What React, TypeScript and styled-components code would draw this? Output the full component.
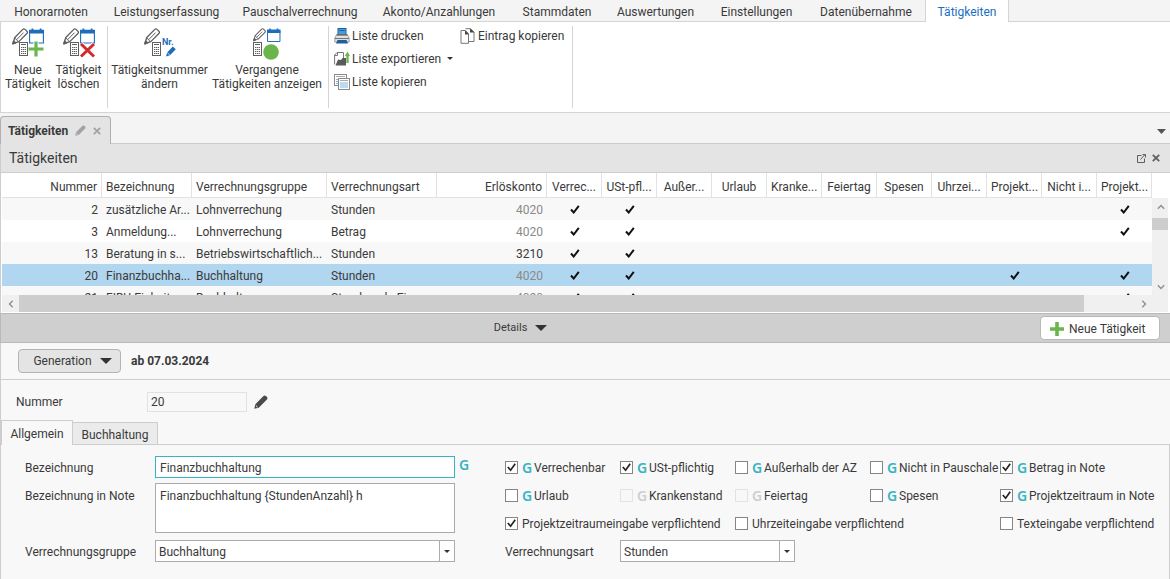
import React from 'react';
import styled, { createGlobalStyle, css } from 'styled-components';

const GlobalStyle = createGlobalStyle`
  * { box-sizing: border-box; }
  body {
    margin: 0;
    background: #f4f4f4;
  }
  body, button, input, select, textarea {
    font-family: Roboto, "Noto Sans", sans-serif;
    font-size: 12px;
    line-height: 16px;
    color: #3a3a3a;
  }
  button { cursor: pointer; }
`;

const Page = styled.div`
  display: flex;
  flex-direction: column;
  min-height: 100vh;
  overflow: hidden;
`;

/* ---------- ribbon ---------- */

const MenuBar = styled.nav`
  display: flex;
  height: 22px;
  border-bottom: 1px solid #d4d4d4;
`;

const MenuTab = styled.button<{ $width: number; $active?: boolean }>`
  flex: 0 0 ${p => p.$width}px;
  height: ${p => (p.$active ? 22 : 21)}px;
  padding: 3px 0 0;
  border: 0;
  background: none;
  white-space: nowrap;
  ${p => p.$active && css`
    padding: 2px 0 0;
    border: solid #d4d4d4;
    border-width: 0 1px;
    background: #fff;
    color: #1b6fc2;
  `}
`;

const Ribbon = styled.div`
  display: flex;
  height: 91px;
  padding: 4px 0;
  border: solid #d4d4d4;
  border-width: 0 0 1px 1px;
  background: #fff;
`;

const RibbonGroup = styled.div`
  display: flex;
  align-items: flex-start;
  padding: 0 3px 0 2px;
  border-right: 1px solid #d4d4d4;
`;

const BigButton = styled.button<{ $width: number }>`
  display: flex;
  flex-direction: column;
  align-items: center;
  gap: 3px;
  width: ${p => p.$width}px;
  padding: 2px 0 0;
  border: 0;
  background: none;
  line-height: 14px;
  white-space: nowrap;
`;

const CommandGrid = styled.div`
  display: grid;
  grid-template-columns: 126px 107px;
  grid-auto-rows: 23px;
  align-items: start;
  padding: 0 2px 0 3px;
`;

const Command = styled.button`
  display: flex;
  align-items: center;
  gap: 2px;
  height: 19px;
  padding: 0;
  border: 0;
  background: none;
  white-space: nowrap;
  svg:last-child:not(:first-child) { margin-left: 4px; }
`;

/* ---------- document tabs ---------- */

const DocumentBar = styled.div`
  display: flex;
  align-items: flex-end;
  justify-content: space-between;
  height: 31px;
  padding-right: 4px;
  border-bottom: 1px solid #cdcdcd;
`;

const DocumentTab = styled.div`
  display: flex;
  align-items: center;
  gap: 7px;
  width: 111px;
  height: 28px;
  margin-bottom: -1px;
  padding-left: 7px;
  border: 1px solid #b0b0b0;
  border-bottom: 0;
  border-radius: 4px 4px 0 0;
  background: #e4e4e4;
  font-weight: 700;
`;

const IconButton = styled.button`
  display: flex;
  padding: 0;
  border: 0;
  background: none;
`;

const BarMenu = styled(IconButton)`
  margin-bottom: 9px;
`;

const TitleBar = styled.header`
  display: flex;
  align-items: center;
  gap: 6px;
  height: 29px;
  padding: 0 10px 0 8px;
  border: solid #cdcdcd;
  border-width: 0 0 1px 1px;
  background: #e4e4e4;
`;

const Title = styled.h1`
  flex: 1;
  margin: 0;
  font-size: 14px;
  font-weight: 400;
`;

/* ---------- data grid ---------- */

const GridPanel = styled.section`
  display: grid;
  grid-template-columns: 1fr 16px;
  grid-template-rows: 122px 17px;
  padding: 0 2px 1px 1px;
  border-left: 1px solid #cdcdcd;
  background: #fff;
`;

const TableViewport = styled.div`
  overflow: hidden;
`;

const Table = styled.table`
  width: 100%;
  table-layout: fixed;
  border-collapse: separate;
  border-spacing: 0;
`;

type Align = 'left' | 'right' | 'center';

const HeadCell = styled.th<{ $align: Align }>`
  height: 25px;
  padding: 3px 4px 0 4px;
  border-right: 1px solid #e2e2e2;
  border-bottom: 1px solid #e2e2e2;
  font-weight: 400;
  text-align: ${p => p.$align};
  white-space: nowrap;
`;

const Row = styled.tr<{ $selected?: boolean }>`
  background: ${p => (p.$selected ? '#b1d6f0' : '#fff')};
  &:nth-child(odd) { background: #f8f8f8; }
`;

const Cell = styled.td<{ $align: Align; $muted?: boolean }>`
  height: 22px;
  padding: 2px 4px 0 4px;
  color: ${p => (p.$muted ? '#8a8a8a' : '#3a3a3a')};
  text-align: ${p => p.$align};
  white-space: nowrap;
  svg { display: inline-block; vertical-align: 0; }
`;

const VerticalScroll = styled.div`
  display: flex;
  flex-direction: column;
  justify-content: space-between;
  margin-top: 25px;
  background: #f0f0f0;
`;

const HorizontalScroll = styled.div`
  display: flex;
  grid-column: 1 / -1;
  background: #f0f0f0;
`;

const ScrollButton = styled.button`
  display: flex;
  align-items: center;
  justify-content: center;
  flex: 0 0 17px;
  width: 17px;
  height: 17px;
  padding: 0;
  border: 0;
  background: none;
`;

const VerticalTrack = styled.div`
  flex: 1;
  padding-top: 3px;
`;

const VerticalThumb = styled.div`
  height: 12px;
  background: #cdcdcd;
`;

const HorizontalTrack = styled.div`
  flex: 1;
  padding-right: 51px;
`;

const HorizontalThumb = styled.div`
  height: 17px;
  background: #cdcdcd;
`;

const ScrollCorner = styled.div`
  flex: 0 0 16px;
`;

/* ---------- details ---------- */

const DetailsBar = styled.div`
  display: flex;
  align-items: center;
  height: 30px;
  padding-right: 10px;
  border: solid #b9b9b9;
  border-width: 1px 0 1px 1px;
  background: #cfcfcf;
`;

const DetailsToggle = styled.button`
  flex: 1;
  display: flex;
  align-items: center;
  justify-content: center;
  gap: 8px;
  padding: 0;
  border: 0;
  background: none;
  font-size: 11px;
`;

const NewButton = styled.button`
  display: flex;
  align-items: center;
  gap: 5px;
  width: 120px;
  height: 24px;
  padding: 1px 0 0 9px;
  border: 1px solid #b9b9b9;
  border-radius: 4px;
  background: #fff;
  white-space: nowrap;
`;

const Details = styled.main`
  flex: 1;
  display: flex;
  flex-direction: column;
  border-left: 1px solid #cdcdcd;
  background: #f8f8f8;
`;

const GenerationBar = styled.div`
  display: flex;
  align-items: center;
  gap: 10px;
  height: 37px;
  padding: 0 17px 1px;
  border-bottom: 1px solid #cdcdcd;
  font-weight: 700;
`;

const GenerationButton = styled.button`
  display: flex;
  align-items: center;
  justify-content: center;
  gap: 8px;
  width: 103px;
  height: 24px;
  padding: 0 0 0 6px;
  border: 1px solid #b4b4b4;
  border-radius: 4px;
  background: #e4e4e4;
`;

const NumberRow = styled.div`
  display: grid;
  grid-template-columns: 131px 100px auto;
  justify-content: start;
  align-items: center;
  height: 40px;
  padding: 4px 0 0 15px;
`;

const NumberInput = styled.input`
  width: 100%;
  height: 20px;
  padding: 0 3px;
  border: 1px solid #e2e2e2;
  background: #f8f8f8;
`;

const EditButton = styled(IconButton)`
  margin-left: 7px;
`;

const TabStrip = styled.div`
  display: flex;
  align-items: flex-end;
  height: 25px;
  border-bottom: 1px solid #cdcdcd;
`;

const FormTab = styled.button<{ $active?: boolean }>`
  width: ${p => (p.$active ? 72 : 85)}px;
  height: ${p => (p.$active ? 25 : 23)}px;
  margin-bottom: -1px;
  padding: 2px 0 0;
  border: 1px solid #cdcdcd;
  ${p => p.$active
    ? css`
        border-bottom: 0;
        background: #f8f8f8;
      `
    : css`
        border-left: 0;
        background: #ebebeb;
      `}
`;

const Form = styled.form`
  flex: 1;
  display: grid;
  grid-template-columns: 480px 1fr;
  align-items: start;
  padding: 9px 0 16px 24px;
  border-right: 1px solid #cdcdcd;
`;

const Fields = styled.div`
  display: grid;
  grid-template-columns: 130px 300px 1fr;
  grid-template-rows: 28px 56px 28px;
`;

const FieldLabel = styled.label`
  padding-top: 6px;
  white-space: nowrap;
`;

const fieldBox = css`
  display: block;
  width: 100%;
  padding: 2px 4px 0;
  border: 1px solid #ababab;
  border-radius: 0;
  background: #fff;
  outline: 0;
`;

const TextInput = styled.input`
  ${fieldBox}
  height: 22px;
  margin-top: 2px;
  border-color: #35b5c4;
`;

const TextArea = styled.textarea`
  ${fieldBox}
  height: 50px;
  margin-top: 1px;
  padding-top: 4px;
  resize: none;
`;

const SelectBox = styled.div<{ $width: number }>`
  display: grid;
  grid-template-columns: 1fr 16px;
  align-items: center;
  width: ${p => p.$width}px;
  height: 22px;
  margin-top: 2px;
  svg {
    grid-area: 1 / 2;
    justify-self: center;
    pointer-events: none;
  }
`;

const Select = styled.select`
  ${fieldBox}
  grid-area: 1 / 1 / 2 / 3;
  height: 22px;
  padding: 2px 3px 0;
  appearance: none;
  background: linear-gradient(#ababab, #ababab) right 14px top / 1px 100% no-repeat #fff;
`;

const Generational = styled.span<{ $disabled?: boolean }>`
  width: 10px;
  color: ${p => (p.$disabled ? '#cfcfcf' : '#35b5c4')};
  font-family: "Noto Sans", "Open Sans", sans-serif;
  font-size: 14px;
  font-weight: 600;
`;

const FieldMark = styled(Generational)`
  padding: 3px 0 0 4px;
`;

const Options = styled.div`
  display: grid;
  grid-template-columns: 115px 115px 135px 130px 1fr;
  grid-auto-rows: 28px;
`;

const CheckLabel = styled.label<{ $span?: number }>`
  grid-column: span ${p => p.$span || 1};
  display: flex;
  align-items: center;
  height: 27px;
  gap: 4px;
  white-space: nowrap;
`;

const CheckText = styled.span`
  display: flex;
  align-items: center;
  gap: 2px;
`;

const BoxStack = styled.span`
  display: grid;
  place-items: center;
  > * { grid-area: 1 / 1; }
  svg { pointer-events: none; visibility: hidden; }
  input:checked + svg { visibility: visible; }
`;

const CheckInput = styled.input`
  width: 13px;
  height: 13px;
  margin: 0;
  appearance: none;
  border: 1px solid #858585;
  background: #fff;
  &:disabled {
    border-color: #e2e2e2;
    background: #f8f8f8;
  }
`;

/* ---------- icons ---------- */

const Calculator = ({ x, y }: { x: number; y: number }) => (
  <g transform={`translate(${x} ${y})`}>
    <rect x=".5" y=".5" width="8" height="13" fill="#fff" stroke="#5f5f5f" />
    <path d="M2 2.500h5" stroke="#5f5f5f" />
    <path d="M2 5.500h5M2 7.500h5M2 9.500h5M2 11.500h5" stroke="#5f5f5f" strokeDasharray="1.300 .550" />
  </g>
);

const OutlinePencil = ({ scale = 1 }: { scale?: number }) => (
  <g transform={`scale(${scale})`} fill="none" stroke="#5f5f5f" strokeWidth="1.300" strokeLinejoin="round">
    <path d="M.8 15.800 2.800 9.500 10.800 1.400q1.100-1.100 2.200 0l1.900 1.900q1.100 1.100 0 2.200L6.800 13.600Z" />
    <path d="M4.800 11.500 11.600 4.600M2.800 9.500q.4 1.800 2 2 .2 1.700 2 2.100" strokeWidth="1" />
    <path d="M.8 15.800 1.700 13 3.500 14.800Z" fill="#5f5f5f" />
  </g>
);

const Calendar = ({ x, size = 15 }: { x: number; size?: number }) => (
  <g transform={`translate(${x} 0) scale(${size / 15})`}>
    <path d="M.6 3v12h13.800V3" fill="#fff" stroke="#1d6dbd" strokeWidth="1.100" />
    <path d="M0 5.500V1.800h2.500V.5h1.800v1.300h6.400V.5h1.800v1.300H15v3.700Z" fill="#1d6dbd" />
  </g>
);

const NewActivityIcon = () => (
  <svg width="32" height="30" viewBox="0 0 32 30">
    <OutlinePencil />
    <Calendar x={17} />
    <Calculator x={7} y={14} />
    <path d="M24 13v16M16 21h16" stroke="#fff" strokeWidth="5" />
    <path d="M24 13.500v15M16.500 21h15" stroke="#6ab64c" strokeWidth="3.200" />
  </svg>
);

const DeleteActivityIcon = () => (
  <svg width="32" height="30" viewBox="0 0 32 30">
    <OutlinePencil />
    <Calendar x={17} />
    <Calculator x={7} y={14} />
    <path d="M18 16 31 28.500M31 16 18 28.500" stroke="#fff" strokeWidth="5" />
    <path d="M18 16 31 28.500M31 16 18 28.500" stroke="#d42a2a" strokeWidth="3" />
  </svg>
);

const RenumberIcon = () => (
  <svg width="32" height="30" viewBox="0 0 32 30">
    <OutlinePencil />
    <Calculator x={8} y={14} />
    <text x="18" y="17" fontSize="9" fontWeight="700" fill="#1d6dbd">Nr.</text>
    <path d="M22 28.500 23.200 24.500 28.800 18.600 31.800 21.300 26 27.200Z" fill="#1d6dbd" />
    <path d="m23.200 24.500 2.800 2.700" stroke="#fff" strokeWidth=".7" />
  </svg>
);

const PastActivitiesIcon = () => (
  <svg width="28" height="32" viewBox="0 0 28 32">
    <OutlinePencil scale={0.8} />
    <Calendar x={14} size={13.5} />
    <Calculator x={0} y={14} />
    <circle cx="18" cy="24" r="7.800" fill="#6ab64c" />
  </svg>
);

const BigIconSlot = styled.span`
  display: flex;
  align-items: flex-start;
  height: 32px;
`;

const PrinterIcon = () => (
  <svg width="16" height="16" viewBox="0 0 16 16">
    <rect x="4" y=".5" width="8" height="6" fill="#4a9ade" stroke="#1d5f9f" />
    <path d="M5.500 2.500h5" stroke="#1d5f9f" />
    <path d="M2.800 6.500h10.400l2 3.500v4H.8v-4Z" fill="#e6e6e6" stroke="#8a8a8a" strokeWidth=".8" />
    <path d="M2.500 7h11" stroke="#555" strokeWidth="1.200" />
    <path d="M1 10.500h14" stroke="#777" strokeWidth="1.200" />
    <path d="M3.500 12h9l1.500 3.500H2Z" fill="#1d5f9f" />
  </svg>
);

const ExportIcon = () => (
  <svg width="16" height="16" viewBox="0 0 16 16">
    <path d="M.6 13.500V4L3 1.500h6.500v9" fill="#fff" stroke="#777" />
    <path d="M3.500 1.500v3h-3" fill="none" stroke="#777" />
    <path d="M1.500 14.500 4 8.500l3 .5 1.500-2H12v7.500Z" fill="#5a5a5a" />
    <path d="M13.500 12V4.500" stroke="#6ab64c" strokeWidth="2.400" />
    <path d="M10.800 5 13.500.5 16 5Z" fill="#6ab64c" />
  </svg>
);

const CopyListIcon = () => (
  <svg width="16" height="16" viewBox="0 0 16 16">
    <rect x=".5" y=".5" width="12" height="11" fill="#fff" stroke="#8a8a8a" />
    <path d="M2 2.500h9" stroke="#aaa" />
    <path d="M2 5.500h2M2 7.500h2M2 9.500h2" stroke="#7fb3e0" />
    <rect x="4.500" y="4.500" width="11" height="11" fill="#fff" stroke="#8a8a8a" />
    <path d="M6 6.500h8" stroke="#aaa" />
    <path d="M6 9h8M6 11h8M6 13h8" stroke="#7fb3e0" />
  </svg>
);

const CopyEntryIcon = () => (
  <svg width="16" height="16" viewBox="0 0 16 16">
    <path d="M5.500.7h5l3.500 3.500v9.300H8" fill="#fff" stroke="#777" />
    <path d="M10 .5v4h4.500Z" fill="#444" />
    <path d="M1 2.500h4.500l3 3v9.800H1Z" fill="#fff" stroke="#777" />
    <path d="M5 2.500v4h4Z" fill="#444" />
  </svg>
);

const Triangle = ({ width, height, color = '#333' }: { width: number; height: number; color?: string }) => (
  <svg width={width} height={height} viewBox="0 0 10 10" preserveAspectRatio="none">
    <path d="M0 0h10L5 10Z" fill={color} />
  </svg>
);

const PencilIcon = ({ size, color, cut = '#fff' }: { size: number; color: string; cut?: string }) => (
  <svg width={size} height={size} viewBox="0 0 14 14">
    <path d="M.3 13.700 1.300 9.200 9.500 1.100q1.300-1.200 2.500 0l.9.9q1.200 1.200 0 2.500L4.800 12.700Z" fill={color} />
    <path d="m1.800 10.500 1.700 1.700" stroke={cut} />
  </svg>
);

const CrossIcon = ({ size, color }: { size: number; color: string }) => (
  <svg width={size} height={size} viewBox="0 0 8 8">
    <path d="m.8.8 6.400 6.400m0-6.400L.8 7.200" stroke={color} strokeWidth="1.800" />
  </svg>
);

const PopOutIcon = () => (
  <svg width="9" height="9" viewBox="0 0 9 9" fill="none" stroke="#5f5f5f">
    <path d="M4.500 1.500h-4v7h7v-4M3.500 5.500l4.500-5M5.500.5h3v3" />
  </svg>
);

const PlusIcon = () => (
  <svg width="14" height="14" viewBox="0 0 14 14">
    <path d="M7 0v14M0 7h14" stroke="#6ab64c" strokeWidth="3.600" />
  </svg>
);

const TickIcon = () => (
  <svg width="10" height="9" viewBox="0 0 10 9">
    <path d="M1 4.500 3.700 7.500 8.800.8" fill="none" stroke="#111" strokeWidth="2" />
  </svg>
);

const BoxTickIcon = () => (
  <svg width="9" height="9" viewBox="0 0 9 9">
    <path d="M.8 4 3.600 7.200 8.200.8" fill="none" stroke="#222" strokeWidth="1.700" />
  </svg>
);

const Chevron = ({ turn }: { turn: number }) => (
  <svg width="8" height="8" viewBox="0 0 8 8">
    <path d="M.8 5.700 4 2.500 7.200 5.700" fill="none" stroke="#8f8f8f" strokeWidth="1.400" transform={`rotate(${turn} 4 4)`} />
  </svg>
);

/* ---------- data ---------- */

const menu: [string, number][] = [
  ['Honorarnoten', 102],
  ['Leistungserfassung', 129],
  ['Pauschalverrechnung', 138],
  ['Akonto/Anzahlungen', 140],
  ['Stammdaten', 96],
  ['Auswertungen', 101],
  ['Einstellungen', 101],
  ['Datenübernahme', 118],
  ['Tätigkeiten', 84],
];

const columns: { title: string; width: number; align: Align }[] = [
  { title: 'Nummer', width: 100, align: 'right' },
  { title: 'Bezeichnung', width: 90, align: 'left' },
  { title: 'Verrechnungsgruppe', width: 135, align: 'left' },
  { title: 'Verrechnungsart', width: 110, align: 'left' },
  { title: 'Erlöskonto', width: 110, align: 'right' },
  ...['Verrec...', 'USt-pfl...', 'Außer...', 'Urlaub', 'Kranke...', 'Feiertag', 'Spesen', 'Uhrzei...', 'Projekt...', 'Nicht i...', 'Projekt...'].map(
    title => ({ title, width: 55, align: 'center' as Align }),
  ),
];

interface Activity {
  cells: string[];
  ownAccount?: boolean;
  ticks: number[];
  selected?: boolean;
}

const activities: Activity[] = [
  { cells: ['2', 'zusätzliche Ar...', 'Lohnverrechung', 'Stunden', '4020'], ticks: [0, 1, 10] },
  { cells: ['3', 'Anmeldung...', 'Lohnverrechung', 'Betrag', '4020'], ticks: [0, 1, 10] },
  { cells: ['13', 'Beratung in s...', 'Betriebswirtschaftlich...', 'Stunden', '3210'], ownAccount: true, ticks: [0, 1] },
  { cells: ['20', 'Finanzbuchha...', 'Buchhaltung', 'Stunden', '4020'], ticks: [0, 1, 8, 10], selected: true },
  { cells: ['21', 'FIBU Einheit...', 'Buchhaltung', 'Stunden als Ein...', '4020'], ticks: [0, 1, 10] },
];

interface Option {
  text: string;
  mark?: boolean;
  checked?: boolean;
  disabled?: boolean;
  span?: number;
}

const options: Option[] = [
  { text: 'Verrechenbar', mark: true, checked: true },
  { text: 'USt-pflichtig', mark: true, checked: true },
  { text: 'Außerhalb der AZ', mark: true },
  { text: 'Nicht in Pauschale', mark: true },
  { text: 'Betrag in Note', mark: true, checked: true },
  { text: 'Urlaub', mark: true },
  { text: 'Krankenstand', mark: true, disabled: true },
  { text: 'Feiertag', mark: true, disabled: true },
  { text: 'Spesen', mark: true },
  { text: 'Projektzeitraum in Note', mark: true, checked: true },
  { text: 'Projektzeitraumeingabe verpflichtend', checked: true, span: 2 },
  { text: 'Uhrzeiteingabe verpflichtend', span: 2 },
  { text: 'Texteingabe verpflichtend' },
];

export default function App() {
  return (
    <Page>
      <GlobalStyle />
      <MenuBar>
        {menu.map(([name, width]) => (
          <MenuTab key={name} $width={width} $active={name === 'Tätigkeiten'}>{name}</MenuTab>
        ))}
      </MenuBar>
      <Ribbon>
        <RibbonGroup>
          <BigButton $width={50}><BigIconSlot><NewActivityIcon /></BigIconSlot><span>Neue<br />Tätigkeit</span></BigButton>
          <BigButton $width={51}><BigIconSlot><DeleteActivityIcon /></BigIconSlot><span>Tätigkeit<br />löschen</span></BigButton>
        </RibbonGroup>
        <RibbonGroup>
          <BigButton $width={99}><BigIconSlot><RenumberIcon /></BigIconSlot><span>Tätigkeitsnummer<br />ändern</span></BigButton>
          <BigButton $width={116}><BigIconSlot><PastActivitiesIcon /></BigIconSlot><span>Vergangene<br />Tätigkeiten anzeigen</span></BigButton>
        </RibbonGroup>
        <RibbonGroup>
          <CommandGrid>
            <Command><PrinterIcon />Liste drucken</Command>
            <Command><CopyEntryIcon />Eintrag kopieren</Command>
            <Command><ExportIcon />Liste exportieren <Triangle width={6} height={3} /></Command>
            <span />
            <Command><CopyListIcon />Liste kopieren</Command>
          </CommandGrid>
        </RibbonGroup>
      </Ribbon>

      <DocumentBar>
        <DocumentTab>
          Tätigkeiten
          <PencilIcon size={11} color="#a3a3a3" cut="#e4e4e4" />
          <IconButton aria-label="Schließen"><CrossIcon size={8} color="#a3a3a3" /></IconButton>
        </DocumentTab>
        <BarMenu aria-label="Fenster"><Triangle width={9} height={5} color="#555" /></BarMenu>
      </DocumentBar>
      <TitleBar>
        <Title>Tätigkeiten</Title>
        <IconButton aria-label="Abdocken"><PopOutIcon /></IconButton>
        <IconButton aria-label="Schließen"><CrossIcon size={8} color="#5f5f5f" /></IconButton>
      </TitleBar>

      <GridPanel>
        <TableViewport>
          <Table>
            <colgroup>
              {columns.map((c, i) => <col key={i} width={c.width} />)}
            </colgroup>
            <thead>
              <tr>
                {columns.map((c, i) => <HeadCell key={i} $align={c.align}>{c.title}</HeadCell>)}
              </tr>
            </thead>
            <tbody>
              {activities.map(a => (
                <Row key={a.cells[0]} $selected={a.selected}>
                  {columns.map((c, i) => (
                    <Cell key={i} $align={c.align} $muted={i === 4 && !a.ownAccount}>
                      {i < 5 ? a.cells[i] : a.ticks.includes(i - 5) && <TickIcon />}
                    </Cell>
                  ))}
                </Row>
              ))}
            </tbody>
          </Table>
        </TableViewport>
        <VerticalScroll>
          <ScrollButton aria-label="Nach oben"><Chevron turn={0} /></ScrollButton>
          <VerticalTrack><VerticalThumb /></VerticalTrack>
          <ScrollButton aria-label="Nach unten"><Chevron turn={180} /></ScrollButton>
        </VerticalScroll>
        <HorizontalScroll>
          <ScrollButton aria-label="Nach links"><Chevron turn={270} /></ScrollButton>
          <HorizontalTrack><HorizontalThumb /></HorizontalTrack>
          <ScrollButton aria-label="Nach rechts"><Chevron turn={90} /></ScrollButton>
          <ScrollCorner />
        </HorizontalScroll>
      </GridPanel>

      <DetailsBar>
        <DetailsToggle>Details <Triangle width={12} height={6} /></DetailsToggle>
        <NewButton><PlusIcon />Neue Tätigkeit</NewButton>
      </DetailsBar>

      <Details>
        <GenerationBar>
          <GenerationButton>Generation <Triangle width={12} height={6} /></GenerationButton>
          ab 07.03.2024
        </GenerationBar>
        <NumberRow>
          <label htmlFor="number">Nummer</label>
          <NumberInput id="number" defaultValue="20" readOnly />
          <EditButton aria-label="Nummer ändern"><PencilIcon size={14} color="#4a4a4a" /></EditButton>
        </NumberRow>
        <TabStrip>
          <FormTab $active>Allgemein</FormTab>
          <FormTab>Buchhaltung</FormTab>
        </TabStrip>
        <Form>
          <Fields>
            <FieldLabel htmlFor="name">Bezeichnung</FieldLabel>
            <TextInput id="name" defaultValue="Finanzbuchhaltung" />
            <FieldMark>G</FieldMark>
            <FieldLabel htmlFor="note">Bezeichnung in Note</FieldLabel>
            <TextArea id="note" defaultValue="Finanzbuchhaltung {StundenAnzahl} h" />
            <span />
            <FieldLabel htmlFor="group">Verrechnungsgruppe</FieldLabel>
            <SelectBox $width={300}>
              <Select id="group"><option>Buchhaltung</option></Select>
              <Triangle width={6} height={3} />
            </SelectBox>
          </Fields>
          <Options>
            {options.map(o => (
              <CheckLabel key={o.text} $span={o.span}>
                <BoxStack>
                  <CheckInput type="checkbox" defaultChecked={o.checked} disabled={o.disabled} />
                  <BoxTickIcon />
                </BoxStack>
                <CheckText>
                  {o.mark && <Generational $disabled={o.disabled}>G</Generational>}
                  {o.text}
                </CheckText>
              </CheckLabel>
            ))}
            <FieldLabel htmlFor="kind">Verrechnungsart</FieldLabel>
            <SelectBox $width={175}>
              <Select id="kind"><option>Stunden</option></Select>
              <Triangle width={6} height={3} />
            </SelectBox>
          </Options>
        </Form>
      </Details>
    </Page>
  );
}
